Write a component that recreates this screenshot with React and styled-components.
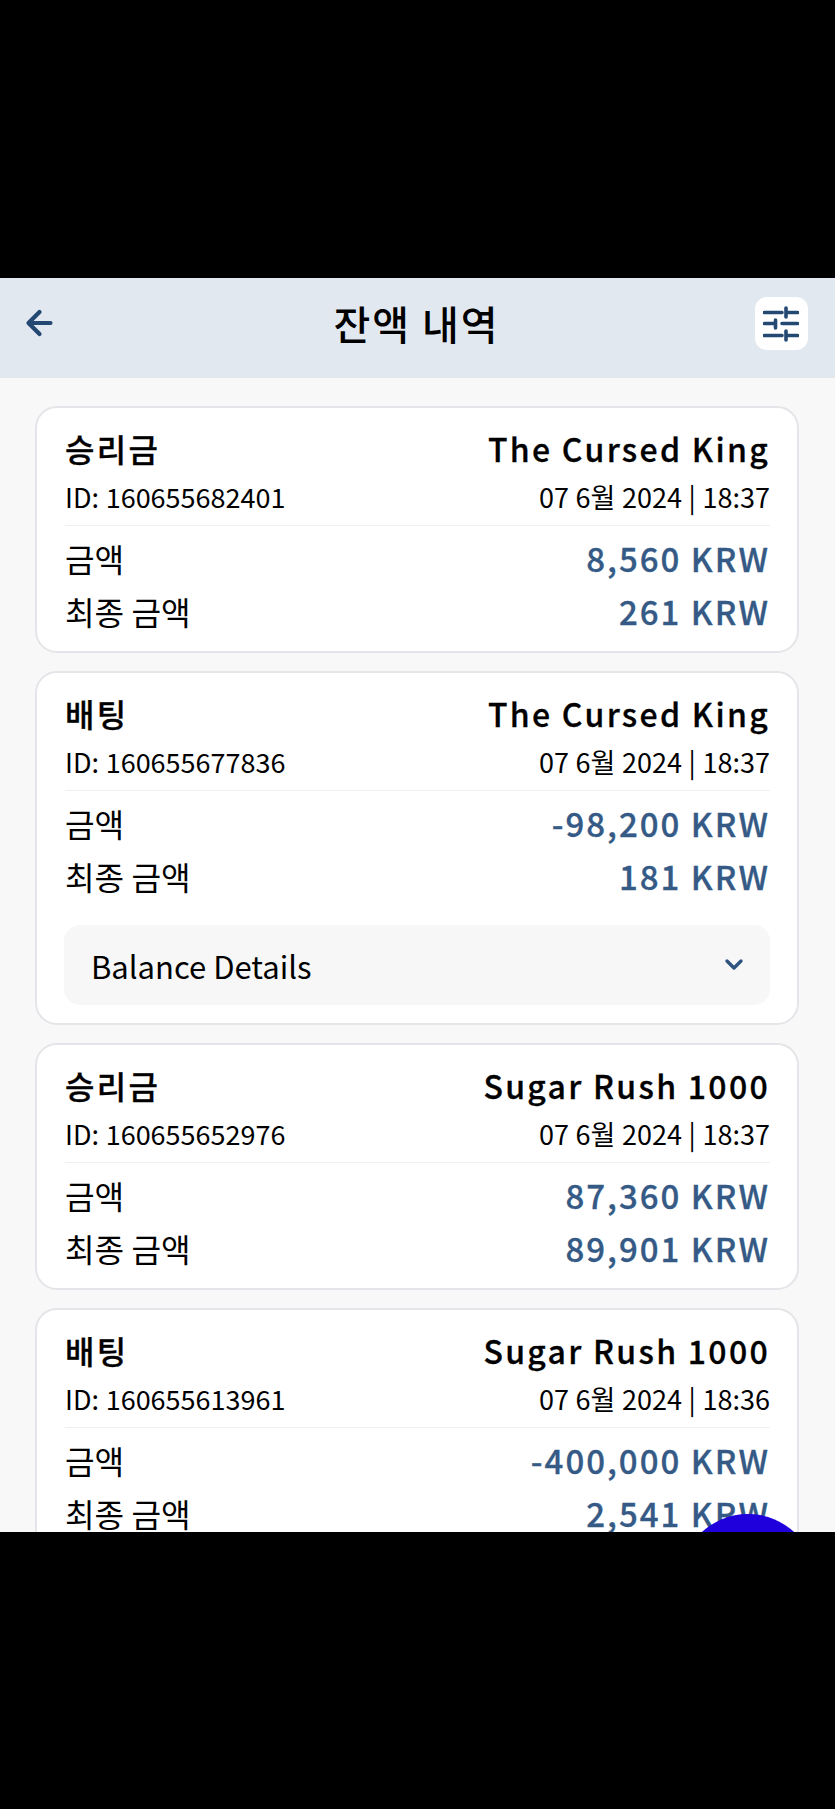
import React from 'react'
import styled, { createGlobalStyle } from 'styled-components'

const GlobalStyle = createGlobalStyle`
  html, body {
    margin: 0;
    padding: 0;
    background: #000;
  }

  body {
    font-family: "Noto Sans CJK KR", "Noto Sans", sans-serif;
  }
`

const rows = [
  { type: '승리금', game: 'The Cursed King', id: '160655682401', date: '07 6월 2024', time: '18:37', amount: '8,560 KRW', final: '261 KRW' },
  { type: '배팅', game: 'The Cursed King', id: '160655677836', date: '07 6월 2024', time: '18:37', amount: '-98,200 KRW', final: '181 KRW', details: true },
  { type: '승리금', game: 'Sugar Rush 1000', id: '160655652976', date: '07 6월 2024', time: '18:37', amount: '87,360 KRW', final: '89,901 KRW' },
  { type: '배팅', game: 'Sugar Rush 1000', id: '160655613961', date: '07 6월 2024', time: '18:36', amount: '-400,000 KRW', final: '2,541 KRW' },
]

const BackIcon = () => (
  <svg width="30" height="30" viewBox="0 0 30 30" fill="none" stroke="#234872" strokeWidth="4.2" strokeLinecap="round" strokeLinejoin="round">
    <path d="M25.500 15H4M14.500 4 3.500 15l11 11" />
  </svg>
)

const FilterIcon = () => (
  <svg width="36" height="38" viewBox="0 0 36 38" fill="none" stroke="#234872" strokeWidth="3.600" strokeLinecap="round">
    <path d="M1.500 8.500h17.500M23 8.500h11.500M23 4v9M1.500 19.500h11M12.500 16v8M19 19.500h15.500M1.500 31.500h17.500M23 31.500h11.500M23 27v9" />
  </svg>
)

const ChevronIcon = () => (
  <svg width="20" height="14" viewBox="0 0 20 14" fill="none" stroke="#2f5480" strokeWidth="3.400" strokeLinecap="round" strokeLinejoin="round">
    <path d="M3 3l7 7 7-7" />
  </svg>
)

const App = () => (
  <>
    <GlobalStyle />
    <Phone>
      <Screen>
        <Header>
          <BackButton><BackIcon /></BackButton>
          <Title>잔액 내역</Title>
          <FilterButton><FilterIcon /></FilterButton>
        </Header>
        <List>
          {rows.map((row) => (
            <Card key={row.id}>
              <Row>
                <CardTitle>{row.type}</CardTitle>
                <CardTitle>{row.game}</CardTitle>
              </Row>
              <MetaRow>
                <Meta>ID: {row.id}</Meta>
                <Meta>{row.date} | {row.time}</Meta>
              </MetaRow>
              <Divider />
              <AmountRow>
                <Label>금액</Label>
                <Amount>{row.amount}</Amount>
              </AmountRow>
              <AmountRow>
                <Label>최종 금액</Label>
                <Amount>{row.final}</Amount>
              </AmountRow>
              {row.details && (
                <Details>
                  <span>Balance Details</span>
                  <ChevronIcon />
                </Details>
              )}
            </Card>
          ))}
        </List>
        <Fab />
      </Screen>
    </Phone>
  </>
)

export default App

const Phone = styled.div`
  height: 1809px;
  padding-top: 278px;
  box-sizing: border-box;
  background: #000;
  overflow: hidden;
`

const Screen = styled.div`
  position: relative;
  height: 1254px;
  overflow: hidden;
  background: #f8f8f8;
`

const Header = styled.header`
  display: flex;
  align-items: center;
  justify-content: space-between;
  height: 100px;
  padding: 0 27px 9px 25px;
  box-sizing: border-box;
  background: #e2e8f0;
  border-bottom: 1px solid #e4e6ea;
`

const BackButton = styled.div`
  display: flex;
  width: 53px;
`

const Title = styled.h1`
  margin: 0;
  font-size: 40px;
  font-weight: 500;
  letter-spacing: 2px;
  color: #000;
`

const FilterButton = styled.div`
  display: flex;
  align-items: center;
  justify-content: center;
  width: 53px;
  height: 53px;
  border-radius: 12px;
  background: #fff;
`

const List = styled.div`
  display: flex;
  flex-direction: column;
  gap: 18px;
  padding: 28px 36px 0 35px;
`

const Card = styled.section`
  padding: 18px 27px 14px 28px;
  border: 2px solid #e3e5e8;
  border-radius: 22px;
  background: #fff;
`

const Row = styled.div`
  display: flex;
  justify-content: space-between;
  align-items: center;
`

const MetaRow = styled(Row)`
  margin-top: 8px;
`

const AmountRow = styled(Row)`
  height: 53px;
`

const CardTitle = styled.div`
  font-size: 32px;
  line-height: 44px;
  font-weight: 500;
  letter-spacing: 2.300px;
  color: #000;
  -webkit-text-stroke: 0.3px #000;
`

const Meta = styled.div`
  font-size: 27px;
  line-height: 38px;
  word-spacing: 0.6px;
  color: #000;
`

const Divider = styled.div`
  height: 1px;
  margin: 9px 0 5px;
  background: #f0f0f0;
`

const Label = styled.div`
  font-size: 32.200px;
  color: #000;
`

const Amount = styled.div`
  font-size: 33px;
  font-weight: 500;
  letter-spacing: 2px;
  color: #355a86;
  -webkit-text-stroke: 0.3px #355a86;
`

const Details = styled.div`
  display: flex;
  align-items: center;
  justify-content: space-between;
  height: 80px;
  margin: 23px 0 4px -1px;
  padding: 0 26px 0 27px;
  border-radius: 16px;
  background: #f7f7f7;
  font-size: 31px;
  color: #000;
`

const Fab = styled.div`
  position: absolute;
  top: 1236px;
  left: 680px;
  width: 136px;
  height: 136px;
  border-radius: 50%;
  background: #1f00dc;
`
